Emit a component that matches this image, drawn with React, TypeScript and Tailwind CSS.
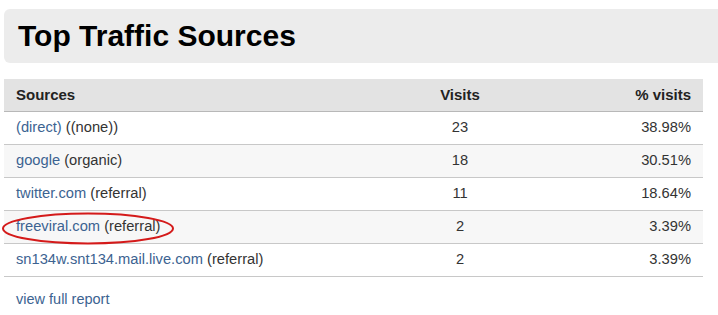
const rows = [
  { src: "(direct)", kind: "((none))", visits: 23, pct: "38.98%" },
  { src: "google", kind: "(organic)", visits: 18, pct: "30.51%" },
  { src: "twitter.com", kind: "(referral)", visits: 11, pct: "18.64%" },
  { src: "freeviral.com", kind: "(referral)", visits: 2, pct: "3.39%", circled: true },
  { src: "sn134w.snt134.mail.live.com", kind: "(referral)", visits: 2, pct: "3.39%" },
];

export default function App() {
  return (
    <div className="w-[718px] h-[315px] bg-white overflow-hidden pt-[9px] pl-[4px] font-['Liberation_Sans',Arial,sans-serif] text-[#333]">
      {/* heading box */}
      <div className="h-[54px] bg-[#ececec] rounded-l-[6px] flex items-center pl-[14px]">
        <h1 className="text-[30px] font-bold text-black leading-none">Top Traffic Sources</h1>
      </div>

      <table className="mt-[16px] w-[699px] border-collapse text-[14.7px]">
        <thead>
          <tr className="h-[32px] bg-[#e3e3e3] border-b border-[#b8b8b8] text-[15px]">
            <th className="text-left font-bold text-[#222] pl-[12px] w-[396px]">Sources</th>
            <th className="text-center font-bold text-[#222] w-[120px]">Visits</th>
            <th className="text-right font-bold text-[#222] pr-[12px]">% visits</th>
          </tr>
        </thead>
        <tbody>
          {rows.map((r, i) => (
            <tr
              key={r.src}
              className={`h-[33px] border-b border-[#c8c8c8] ${i % 2 === 1 ? "bg-[#f7f7f7]" : "bg-white"}`}
            >
              <td className="pl-[12px] relative">
                <a className="text-[#3c6391]">{r.src}</a> <span>{r.kind}</span>
                {r.circled && (
                  <svg
                    className="absolute left-[-3px] top-[1px] pointer-events-none"
                    width="176"
                    height="34"
                    viewBox="0 0 176 34"
                  >
                    <ellipse cx="87" cy="16.5" rx="85" ry="15" fill="none" stroke="#d41a1a" strokeWidth="2" />
                  </svg>
                )}
              </td>
              <td className="text-center">{r.visits}</td>
              <td className="text-right pr-[12px]">{r.pct}</td>
            </tr>
          ))}
        </tbody>
      </table>

      <div className="pl-[12px] pt-[12px] text-[14.5px]">
        <a className="text-[#3c6391]">view full report</a>
      </div>
    </div>
  );
}
